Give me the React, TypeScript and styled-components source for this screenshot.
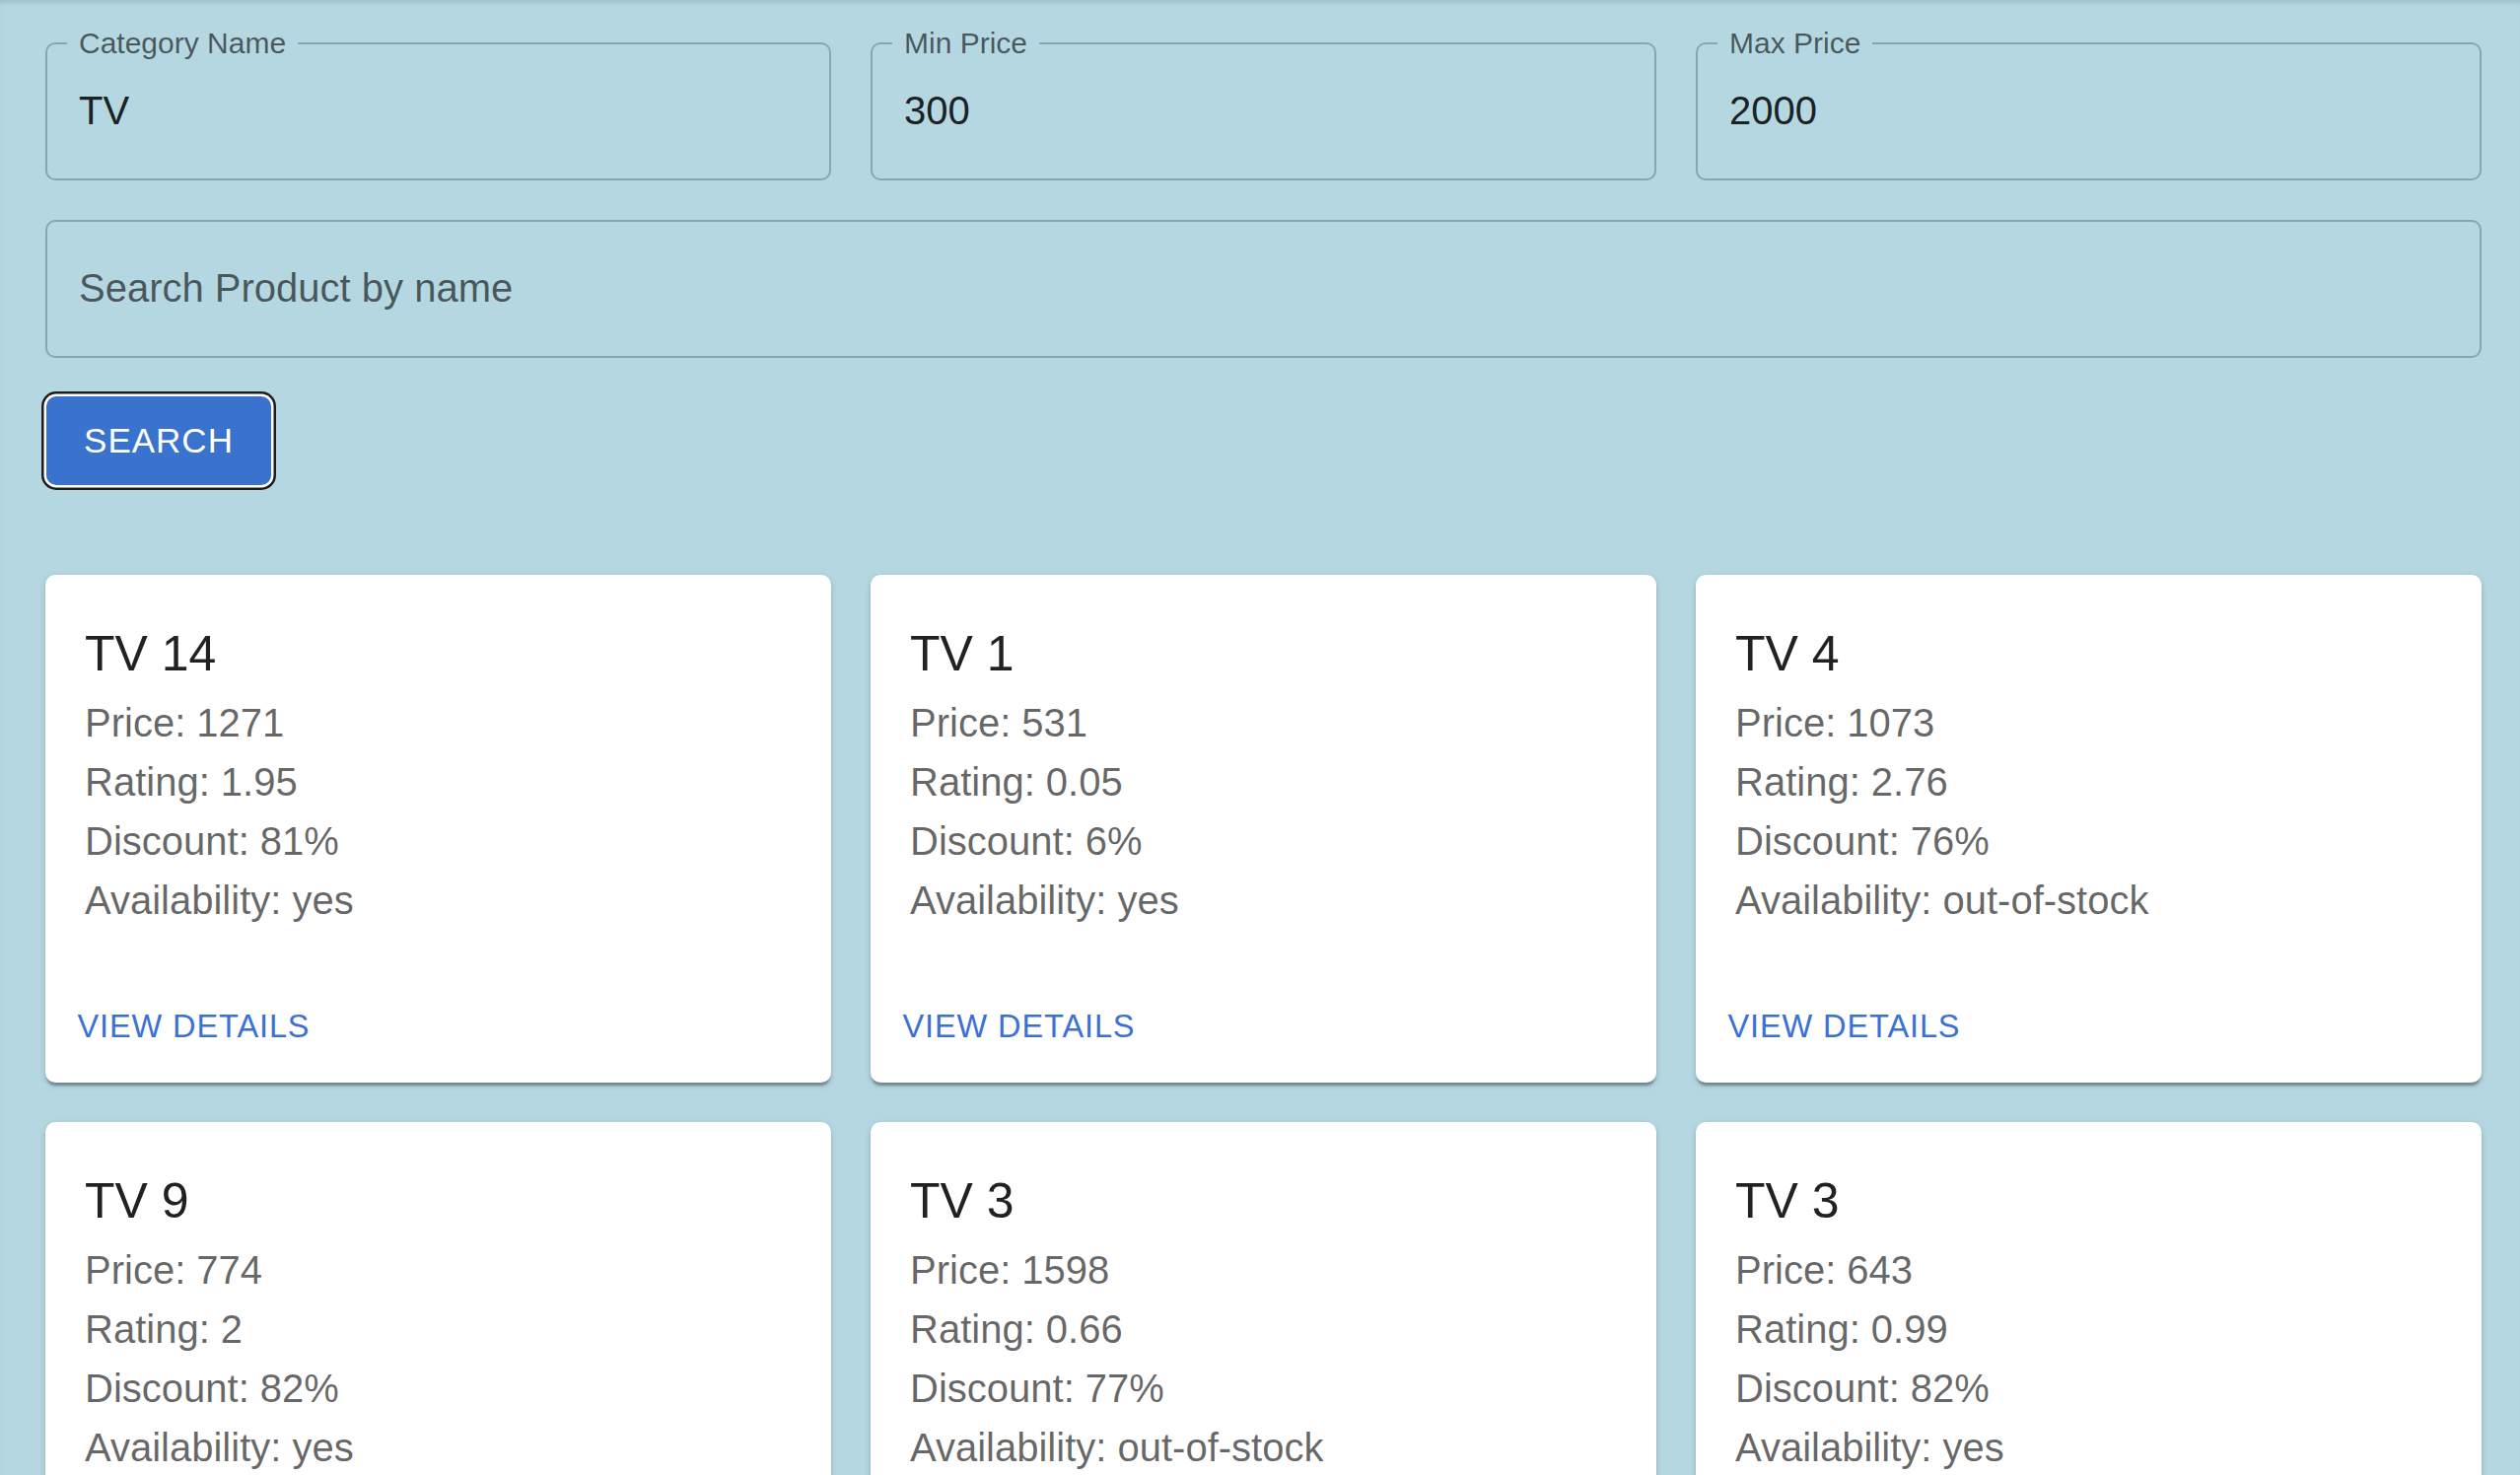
import React from "react";
import styled, { createGlobalStyle } from "styled-components";

const GlobalStyle = createGlobalStyle`
  html {
    scrollbar-width: none;
  }
  html::-webkit-scrollbar {
    display: none;
  }
  body {
    margin: 0;
    background-color: #b4d7e2;
    font-family: "Liberation Sans", Arial, sans-serif;
  }
`;

const Page = styled.div`
  min-height: 100vh;
  padding: 29px 39px 40px 46px;
  box-sizing: border-box;
  box-shadow: inset 0 5px 5px -3px rgba(0, 0, 0, 0.14);
`;

const FilterRow = styled.div`
  display: grid;
  grid-template-columns: repeat(3, 1fr);
  gap: 40px;
`;

const FieldBox = styled.fieldset`
  margin: 0;
  padding: 0 0 15px 0;
  min-width: 0;
  border: 2.5px solid rgba(0, 0, 0, 0.23);
  border-radius: 10px;
`;

const FieldLegend = styled.legend<{ $empty?: boolean }>`
  margin-left: 20px;
  padding: ${(p) => (p.$empty ? "0" : "0 12px")};
  height: 30px;
  font-size: 30px;
  line-height: 30px;
  color: rgba(0, 0, 0, 0.6);
  white-space: nowrap;
`;

const FieldInput = styled.input`
  display: block;
  width: 100%;
  height: 107px;
  box-sizing: border-box;
  padding: 0 32px;
  border: none;
  outline: none;
  background: transparent;
  font-family: "Liberation Sans", Arial, sans-serif;
  font-size: 40px;
  color: rgba(0, 0, 0, 0.87);

  &::placeholder {
    color: rgba(0, 0, 0, 0.6);
    opacity: 1;
  }
`;

const SearchRow = styled.div`
  margin-top: 26px;
`;

const SearchButton = styled.button`
  margin: 39px 0 0 1px;
  width: 228px;
  height: 90px;
  border: none;
  border-radius: 10px;
  background-color: #3973cd;
  color: #ffffff;
  font-family: "Liberation Sans", Arial, sans-serif;
  font-size: 35px;
  font-weight: 500;
  letter-spacing: 1px;
  text-transform: uppercase;
  cursor: pointer;
  box-shadow: 0 0 0 2.5px #ffffff, 0 0 0 5px #1c1c1c;
`;

const CardGrid = styled.div`
  margin-top: 91px;
  display: grid;
  grid-template-columns: repeat(3, 1fr);
  gap: 40px;
`;

const Card = styled.div`
  background-color: #ffffff;
  border-radius: 10px;
  box-shadow: 0 5px 2.5px -2.5px rgba(0, 0, 0, 0.2),
    0 2.5px 2.5px 0 rgba(0, 0, 0, 0.14), 0 2.5px 7.5px 0 rgba(0, 0, 0, 0.12);
  overflow: hidden;
`;

const CardContent = styled.div`
  padding: 40px 40px 40px;
`;

const CardTitle = styled.div`
  font-size: 50px;
  line-height: 80px;
  color: rgba(0, 0, 0, 0.87);
`;

const CardLine = styled.div`
  font-size: 40px;
  line-height: 60px;
  color: rgba(0, 0, 0, 0.6);
`;

const CardActions = styled.div`
  display: flex;
  align-items: center;
  padding: 20px 20px 18px;
`;

const DetailsButton = styled.button`
  padding: 10px 12.5px;
  border: none;
  background: transparent;
  font-family: "Liberation Sans", Arial, sans-serif;
  font-size: 32.5px;
  font-weight: 500;
  line-height: 1.75;
  letter-spacing: 0.9px;
  color: #3b70d6;
  text-transform: uppercase;
  cursor: pointer;
`;

type Product = {
  name: string;
  price: number;
  rating: number;
  discount: number;
  availability: string;
};

const products: Product[] = [
  { name: "TV 14", price: 1271, rating: 1.95, discount: 81, availability: "yes" },
  { name: "TV 1", price: 531, rating: 0.05, discount: 6, availability: "yes" },
  { name: "TV 4", price: 1073, rating: 2.76, discount: 76, availability: "out-of-stock" },
  { name: "TV 9", price: 774, rating: 2, discount: 82, availability: "yes" },
  { name: "TV 3", price: 1598, rating: 0.66, discount: 77, availability: "out-of-stock" },
  { name: "TV 3", price: 643, rating: 0.99, discount: 82, availability: "yes" },
];

type TextFieldProps = {
  label?: string;
  value?: string;
  placeholder?: string;
};

function TextField({ label, value, placeholder }: TextFieldProps) {
  return (
    <FieldBox>
      <FieldLegend $empty={!label}>{label}</FieldLegend>
      <FieldInput defaultValue={value} placeholder={placeholder} />
    </FieldBox>
  );
}

function ProductCard({ product }: { product: Product }) {
  return (
    <Card>
      <CardContent>
        <CardTitle>{product.name}</CardTitle>
        <CardLine>Price: {product.price}</CardLine>
        <CardLine>Rating: {product.rating}</CardLine>
        <CardLine>Discount: {product.discount}%</CardLine>
        <CardLine>Availability: {product.availability}</CardLine>
      </CardContent>
      <CardActions>
        <DetailsButton>View Details</DetailsButton>
      </CardActions>
    </Card>
  );
}

function App() {
  return (
    <>
      <GlobalStyle />
      <Page>
        <FilterRow>
          <TextField label="Category Name" value="TV" />
          <TextField label="Min Price" value="300" />
          <TextField label="Max Price" value="2000" />
        </FilterRow>
        <SearchRow>
          <TextField placeholder="Search Product by name" />
        </SearchRow>
        <SearchButton>Search</SearchButton>
        <CardGrid>
          {products.map((p, i) => (
            <ProductCard key={i} product={p} />
          ))}
        </CardGrid>
      </Page>
    </>
  );
}

export default App;
